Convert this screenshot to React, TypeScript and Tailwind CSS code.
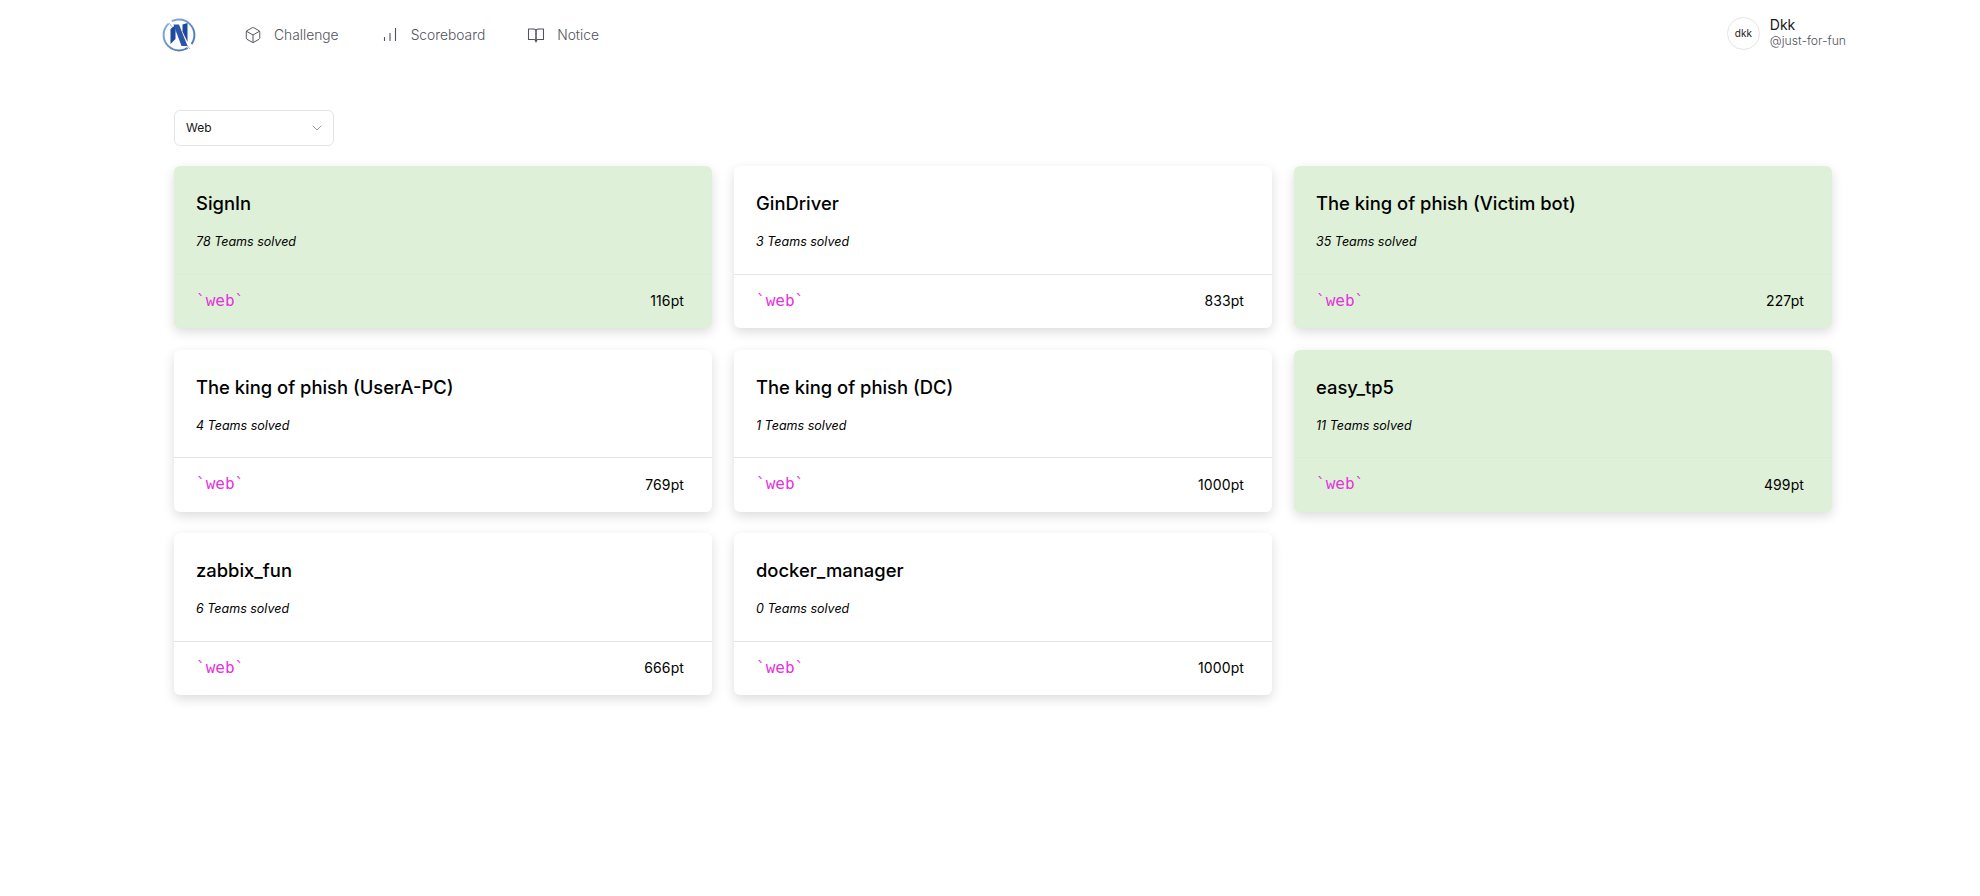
import React from "react";
import { Box, ChevronDown } from "lucide-react";

const challenges = [
  { name: "SignIn", solved: 78, points: 116, done: true },
  { name: "GinDriver", solved: 3, points: 833, done: false },
  { name: "The king of phish (Victim bot)", solved: 35, points: 227, done: true },
  { name: "The king of phish (UserA-PC)", solved: 4, points: 769, done: false },
  { name: "The king of phish (DC)", solved: 1, points: 1000, done: false },
  { name: "easy_tp5", solved: 11, points: 499, done: true },
  { name: "zabbix_fun", solved: 6, points: 666, done: false },
  { name: "docker_manager", solved: 0, points: 1000, done: false },
];

function Logo() {
  return (
    <svg width="36" height="36" viewBox="0 0 36 36" fill="none">
      <defs>
        <linearGradient id="ring" x1="0" y1="0" x2="1" y2="1">
          <stop offset="0" stopColor="#8fb4de" />
          <stop offset="1" stopColor="#3f6fb5" />
        </linearGradient>
      </defs>
      <circle cx="18" cy="18" r="15.4" stroke="url(#ring)" strokeWidth="2" />
      <path d="M4 2 L9 2 L33 30 L29 34 Z" fill="#ffffff" />
      <path d="M8 6 L29 32" stroke="#9db8dc" strokeWidth="1" />
      <path d="M9.5 27 V12 L14.5 8 V22 Z" fill="#1f4a9c" />
      <path d="M12.5 7.5 L18 7.5 L26.5 29 L20.5 29 Z" fill="#2a55a8" />
      <path d="M21.5 7.5 L26.5 6 V25 L21.5 14.5 Z" fill="#1f4a9c" />
    </svg>
  );
}

function BarsIcon() {
  return (
    <svg width="18" height="18" viewBox="0 0 18 18" fill="none" stroke="#52525b" strokeWidth="1.1">
      <path d="M3.5 15 V11 M9 15 V7 M14.5 15 V2" />
    </svg>
  );
}

function BookIcon() {
  return (
    <svg width="18" height="18" viewBox="0 0 24 24" fill="none" stroke="#52525b" strokeWidth="1.4" strokeLinecap="round" strokeLinejoin="round">
      <path d="M2 4h7a3 3 0 0 1 3 3v14a3 3 0 0 0-3-3H2z" />
      <path d="M22 4h-7a3 3 0 0 0-3 3v14a3 3 0 0 1 3-3h7z" />
    </svg>
  );
}

function NavItem({ icon, label }: { icon: React.ReactNode; label: string }) {
  return (
    <a className="flex items-center gap-[12px] px-[12px] h-[36px] text-[13.8px] font-light text-[#52525b]">
      <span className="w-[18px] flex justify-center text-[#52525b]">{icon}</span>
      <span>{label}</span>
    </a>
  );
}

function ChallengeCard({ name, solved, points, done }: (typeof challenges)[number]) {
  return (
    <div
      className={`h-[162px] rounded-[6px] shadow-[0_4px_12px_rgba(0,0,0,0.14)] flex flex-col ${
        done ? "bg-[#dff0d8]" : "bg-white"
      }`}
    >
      <div className="px-[22px] pt-[23px] flex-1">
        <h3 className="text-[18.4px] leading-[28px] font-medium text-black">{name}</h3>
        <p className="mt-[15px] text-[12.5px] leading-[20px] italic text-black">{solved} Teams solved</p>
      </div>
      <div className={`h-[54.5px] flex items-center justify-between pb-[1px] pl-[22px] pr-[28px] border-t ${done ? "border-[#dcecd5]" : "border-[#e4e4e7]"}`}>
        <span className="text-[16px] text-[#e433dc] font-['DejaVu_Sans_Mono',monospace]">`web`</span>
        <span className="text-[14px] tracking-[0.1px] text-black">{points}pt</span>
      </div>
    </div>
  );
}

export default function App() {
  return (
    <div className="min-h-[896px] bg-white font-['Inter',sans-serif]">
      <header className="h-[70px] pl-[161px] pr-[134px] flex items-center justify-between">
        <div className="flex items-center">
          <Logo />
          <nav className="flex items-center ml-[35px] gap-[18px]">
            <NavItem icon={<Box size={18} strokeWidth={1.3} />} label="Challenge" />
            <NavItem icon={<BarsIcon />} label="Scoreboard" />
            <NavItem icon={<BookIcon />} label="Notice" />
          </nav>
        </div>
        <div className="flex items-center gap-[10px] mb-[4px]">
          <div className="w-[33px] h-[33px] rounded-full border border-[#e4e4e7] flex items-center justify-center text-[10px] text-[#18181b]">
            dkk
          </div>
          <div className="flex flex-col">
            <span className="text-[14px] leading-[16px] text-[#18181b]">Dkk</span>
            <span className="text-[12.2px] leading-[16px] font-light text-[#52525b]">@just-for-fun</span>
          </div>
        </div>
      </header>

      <main className="w-[1632px] mx-auto mt-[40px]">
        <div className="w-[160px] h-[36px] rounded-[6px] border border-[#e4e4e7] flex items-center justify-between pl-[11px] pr-[8px] text-[12px] text-[#18181b]">
          <span>Web</span>
          <ChevronDown size={16} strokeWidth={1.1} className="text-[#71717a]" />
        </div>
        <div className="mt-[20px] grid grid-cols-3 gap-x-[22px] gap-y-[21.5px] w-[1658px]">
          {challenges.map((c) => (
            <ChallengeCard key={c.name} {...c} />
          ))}
        </div>
      </main>
    </div>
  );
}
